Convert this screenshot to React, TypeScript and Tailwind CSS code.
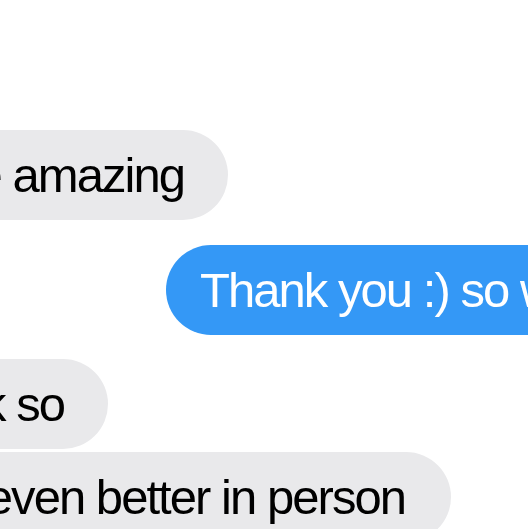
export default function App() {
  const text = "font-['Liberation_Sans',Arial,sans-serif] text-[49px] tracking-[-0.04em] leading-none whitespace-nowrap";

  return (
    <div className="w-[528px] h-[529px] overflow-hidden bg-white flex flex-col pt-[130px]">
      {/* received */}
      <div className="flex">
        <div className={`-ml-[260px] w-[488px] h-[90px] shrink-0 rounded-full bg-[#e9e9eb] flex items-center justify-end pr-[44px] text-black ${text}`}>
          You're amazing
        </div>
      </div>

      {/* sent */}
      <div className="flex mt-[25px]">
        <div className={`ml-[166px] w-[500px] h-[90px] shrink-0 rounded-full bg-[#3498f6] flex items-center pl-[34px] text-white ${text}`}>
          Thank you :) so wonderful
        </div>
      </div>

      <div className="flex mt-[24px]">
        <div className={`-ml-[260px] w-[368px] h-[90px] shrink-0 rounded-full bg-[#e9e9eb] flex items-center justify-end pr-[44px] text-black ${text}`}>
          I think so
        </div>
      </div>

      <div className="flex mt-[3px]">
        <div className={`-ml-[260px] w-[711px] h-[90px] shrink-0 rounded-full bg-[#e9e9eb] flex items-center justify-end pr-[46px] text-black ${text}`}>
          It's even better in person
        </div>
      </div>
    </div>
  );
}
